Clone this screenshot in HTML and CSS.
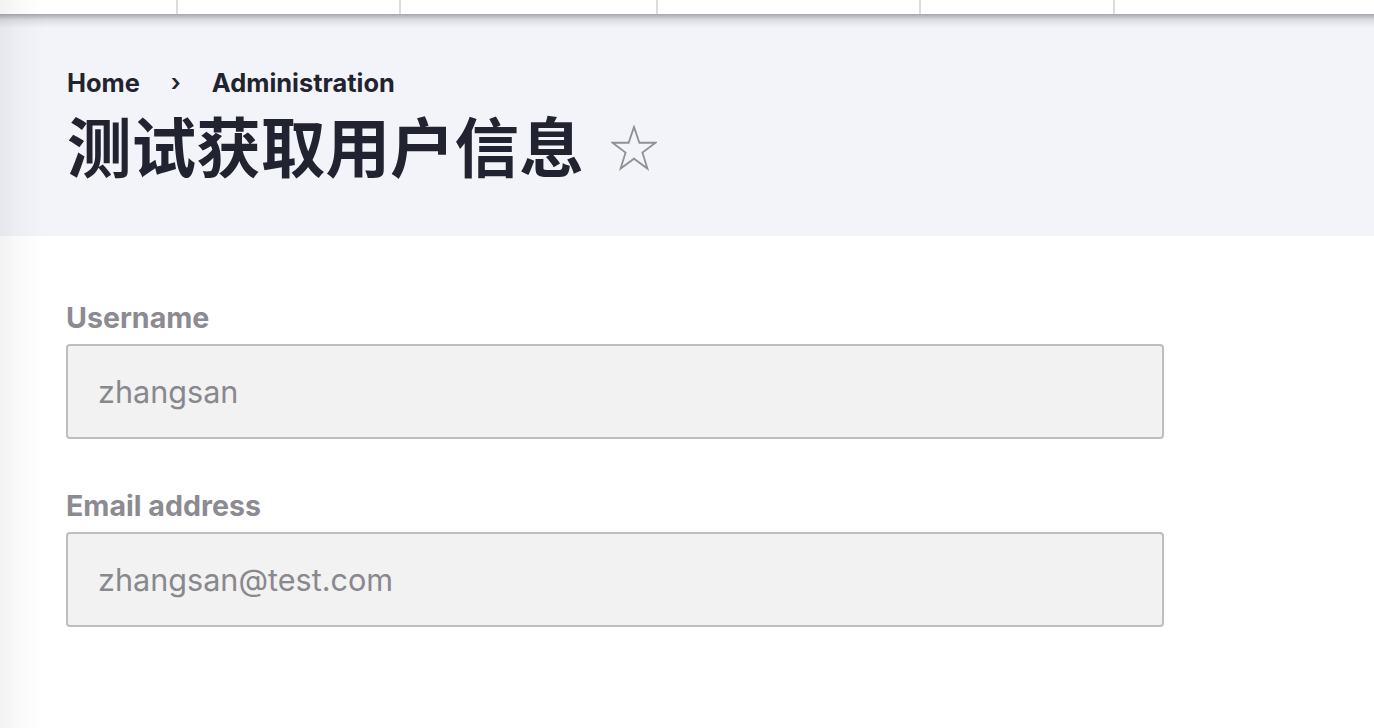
FILE: index.html
```html
<!DOCTYPE html>
<html lang="zh-CN">
<head>
  <meta charset="UTF-8">
  <meta name="viewport" content="width=device-width, initial-scale=1.0">
  <title>测试获取用户信息</title>
  <link rel="stylesheet" href="styles.css">
</head>
<body>
  <div class="toolbar">
    <div class="toolbar-item w1"></div>
    <div class="toolbar-item w2"></div>
    <div class="toolbar-item w3"></div>
    <div class="toolbar-item w4"></div>
    <div class="toolbar-item w5"></div>
    <div class="toolbar-item last"></div>
  </div>
  <header class="page-header">
    <nav class="breadcrumb">
      <a href="#">Home</a>
      <span class="sep">›</span>
      <a href="#">Administration</a>
    </nav>
    <div class="title-row">
      <h1>测试获取用户信息</h1>
      <svg class="star" width="46" height="46" viewBox="0 0 48 48">
        <polygon points="24,2 29.6,18.5 46.5,18.5 32.8,28.7 38,45.5 24,35.2 10,45.5 15.2,28.7 1.5,18.5 18.4,18.5" fill="none" stroke="#909096" stroke-width="1.9" stroke-linejoin="miter"/>
      </svg>
    </div>
  </header>
  <main class="content">
    <div class="field">
      <label for="username">Username</label>
      <input type="text" id="username" value="zhangsan" disabled>
    </div>
    <div class="field">
      <label for="email">Email address</label>
      <input type="text" id="email" value="zhangsan@test.com" disabled>
    </div>
  </main>
  <div class="edge-shadow"></div>
</body>
</html>
```

FILE: styles.css
```css
body {
  margin: 0;
  background-color: #fff;
  color: #222330;
  font-family: Inter, "Noto Sans", "Noto Sans CJK SC", sans-serif;
}

.toolbar {
  display: flex;
  height: 14px;
  background-color: #fff;
}
.toolbar-item {
  border-right: 2px solid #dcdcdf;
}
.w1 { width: 176px; }
.w2 { width: 221px; }
.w3 { width: 255px; }
.w4 { width: 261px; }
.w5 { width: 192px; }
.toolbar-item.last {
  flex: 1;
  border-right: none;
}

.page-header {
  background: linear-gradient(to bottom, rgba(60, 60, 70, 0.42), rgba(60, 60, 70, 0.12) 6px, rgba(60, 60, 70, 0) 14px), #f3f4f9;
  padding: 54px 66px 52px 67px;
}

.breadcrumb {
  display: flex;
  align-items: center;
  gap: 31px;
  font-size: 25.4px;
  font-weight: 700;
  line-height: 30px;
}
.breadcrumb a {
  color: #222330;
  text-decoration: none;
}
.breadcrumb .sep {
  font-size: 24px;
  font-weight: 600;
}

.title-row {
  display: flex;
  align-items: center;
  margin-top: 6px;
  height: 80px;
}
h1 {
  margin: 0;
  font-family: "Noto Sans CJK SC", "Noto Sans", sans-serif;
  font-size: 64.6px;
  font-weight: 700;
  line-height: 80px;
  color: #222330;
}
.star {
  margin-left: 27px;
  margin-top: 8px;
}

.content {
  padding: 64px 66px;
}
.field {
  margin-bottom: 49px;
}
.field label {
  display: block;
  font-size: 28.6px;
  font-weight: 700;
  line-height: 36px;
  color: #8b8b91;
  margin-bottom: 8px;
}
.field input {
  display: block;
  width: 1098px;
  height: 95px;
  box-sizing: border-box;
  padding: 0 30px;
  border: 2px solid #bdbdc2;
  border-radius: 4px;
  background-color: #f2f2f2;
  font-family: Inter, "Noto Sans", sans-serif;
  font-size: 30.6px;
  color: #88888e;
  -webkit-text-fill-color: #88888e;
  opacity: 1;
}

.edge-shadow {
  position: fixed;
  top: 0;
  left: 0;
  bottom: 0;
  width: 44px;
  background: linear-gradient(to right, rgba(40, 40, 60, 0.06), rgba(40, 40, 60, 0.025) 20px, rgba(40, 40, 60, 0));
  pointer-events: none;
}
```
